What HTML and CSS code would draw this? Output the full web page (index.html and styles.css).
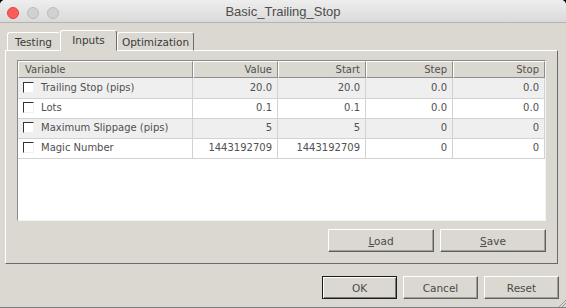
FILE: index.html
```html
<!DOCTYPE html>
<html>
<head>
<meta charset="utf-8">
<link rel="stylesheet" href="styles.css">
</head>
<body>
<div class="window">
  <div class="titlebar">
    <div class="lights">
      <span class="light red"></span>
      <span class="light gray"></span>
      <span class="light gray"></span>
    </div>
    <div class="title">Basic_Trailing_Stop</div>
  </div>
  <div class="body">
    <div class="tabs">
      <div class="tab tab-testing">Testing</div>
      <div class="tab tab-inputs active">Inputs</div>
      <div class="tab tab-opt">Optimization</div>
    </div>
    <div class="panel">
      <div class="table-box">
        <div class="thead">
          <div class="th left">Variable</div>
          <div class="th">Value</div>
          <div class="th">Start</div>
          <div class="th">Step</div>
          <div class="th">Stop</div>
        </div>
        <div class="row odd">
          <div class="td left"><span class="cb"></span>Trailing Stop (pips)</div>
          <div class="td">20.0</div><div class="td">20.0</div><div class="td">0.0</div><div class="td">0.0</div>
        </div>
        <div class="row">
          <div class="td left"><span class="cb"></span>Lots</div>
          <div class="td">0.1</div><div class="td">0.1</div><div class="td">0.0</div><div class="td">0.0</div>
        </div>
        <div class="row odd">
          <div class="td left"><span class="cb"></span>Maximum Slippage (pips)</div>
          <div class="td">5</div><div class="td">5</div><div class="td">0</div><div class="td">0</div>
        </div>
        <div class="row">
          <div class="td left"><span class="cb"></span>Magic Number</div>
          <div class="td">1443192709</div><div class="td">1443192709</div><div class="td">0</div><div class="td">0</div>
        </div>
      </div>
      <div class="panel-actions">
        <button class="btn wide"><u>L</u>oad</button>
        <button class="btn wide"><u>S</u>ave</button>
      </div>
    </div>
    <div class="dialog-actions">
      <button class="btn default">OK</button>
      <button class="btn">Cancel</button>
      <button class="btn">Reset</button>
    </div>
  </div>
  <svg class="grip" width="8" height="8" viewBox="0 0 8 8">
    <line x1="8" y1="1" x2="1" y2="8" stroke="#9a9a9a" stroke-width="1"/>
    <line x1="8" y1="4" x2="4" y2="8" stroke="#9a9a9a" stroke-width="1"/>
  </svg>
</div>
</body>
</html>
```
FILE: styles.css
```css
* { box-sizing: border-box; }
html, body { margin: 0; padding: 0; background: #000; }
.window {
  position: relative;
  width: 566px;
  height: 308px;
  background: #dbd8d1;
  border-radius: 5px 5px 0 0;
  overflow: hidden;
  display: flex;
  flex-direction: column;
  font-family: "DejaVu Sans", sans-serif;
  font-size: 10px;
  color: #4a4a4a;
  border-bottom: 1px solid #7c7c7c;
}
.titlebar {
  position: relative;
  height: 23px;
  flex: none;
  background: linear-gradient(#eeeeee, #dadada);
  border-bottom: 1px solid #b3b3b3;
  display: flex;
  align-items: center;
  justify-content: center;
}
.lights {
  position: absolute;
  left: 7px;
  top: 7px;
  display: flex;
  gap: 8px;
}
.light {
  width: 12px;
  height: 12px;
  border-radius: 50%;
  display: block;
}
.light.red { background: #fc5e57; border: 1px solid #e0443e; }
.light.gray { background: #d1d1d1; border: 1px solid #bcbcbc; }
.title {
  font-family: "Liberation Sans", Arial, sans-serif;
  font-size: 13px;
  color: #4d4d4d;
  padding-top: 1px;
}
.body {
  flex: 1;
  padding-top: 7px;
  display: flex;
  flex-direction: column;
}
.tabs {
  display: flex;
  align-items: flex-end;
  margin-left: 7px;
  height: 21px;
  margin-bottom: -1px;
  position: relative;
  z-index: 1;
}
.tab {
  height: 19px;
  border-top: 1px solid #fff;
  border-left: 1px solid #fff;
  border-right: 1px solid #6c6c6c;
  border-radius: 3px 3px 0 0;
  display: flex;
  align-items: center;
  justify-content: center;
  color: #3a3a3a;
  font-size: 10.5px;
  background: #dbd8d1;
  border-bottom: 1px solid #fff;
}
.tab-testing { width: 53px; border-right-color: #dbd8d1; }
.tab-inputs { width: 57px; height: 21px; border-bottom-color: #dbd8d1; padding-bottom: 1px; }
.tab-opt { width: 77px; }
.panel {
  margin-left: 5px;
  width: 553px;
  height: 214px;
  border-top: 1px solid #fff;
  border-left: 1px solid #fff;
  border-right: 1px solid #6a6a6a;
  border-bottom: 1px solid #6a6a6a;
  padding: 9px 11px 0 11px;
}
.table-box {
  width: 529px;
  height: 161px;
  background: #fff;
  border-top: 1px solid #8a8a8a;
  border-left: 1px solid #8a8a8a;
  border-right: 1px solid #f4f4f4;
  border-bottom: 1px solid #f4f4f4;
}
.thead, .row {
  display: grid;
  grid-template-columns: 175px 85px 88px 87px 92px;
}
.thead { height: 17px; background: #dbd8d1; }
.th {
  border-left: 1px solid #fff;
  border-top: 1px solid #fff;
  border-right: 1px solid #8e8e8e;
  border-bottom: 1px solid #8e8e8e;
  text-align: right;
  padding: 0 5px;
  line-height: 15px;
  color: #505050;
}
.th.left { text-align: left; padding-left: 6px; }
.row { height: 20px; }
.row.odd { background: #efefef; }
.td {
  border-right: 1px solid #d2d2d2;
  border-bottom: 1px solid #d2d2d2;
  text-align: right;
  padding: 0 5px;
  line-height: 20px;
  color: #505050;
}
.td.left {
  text-align: left;
  padding-left: 5px;
  display: flex;
  align-items: center;
}
.cb {
  width: 11px;
  height: 11px;
  border-top: 1px solid #333;
  border-left: 1px solid #333;
  border-right: 1px solid #f0f0f0;
  border-bottom: 1px solid #f0f0f0;
  background: #fff;
  margin-right: 7px;
  margin-top: -2px;
  flex: none;
}
.panel-actions {
  display: flex;
  justify-content: flex-end;
  gap: 6px;
  margin-top: 8px;
}
.btn {
  width: 75px;
  height: 23px;
  padding: 0;
  margin: 0;
  font-family: "DejaVu Sans", sans-serif;
  font-size: 10.5px;
  color: #4a4a4a;
  background: #dbd8d1;
  border-top: 1px solid #fff;
  border-left: 1px solid #fff;
  border-right: 1px solid #5e5e5e;
  border-bottom: 1px solid #5e5e5e;
  box-shadow: inset -1px -1px 0 #9e9e9e;
}
.btn.wide { width: 106px; }
.btn u { text-decoration: underline; text-underline-offset: 1px; }
.btn.default {
  border: 1px solid #1c1c1c;
  box-shadow: inset 1px 1px 0 #fff, inset -1px -1px 0 #7a7a7a;
}
.dialog-actions {
  display: flex;
  justify-content: flex-end;
  gap: 6px;
  margin-top: 12px;
  padding-right: 7px;
}
.grip {
  position: absolute;
  right: 0;
  bottom: 0;
}
```
